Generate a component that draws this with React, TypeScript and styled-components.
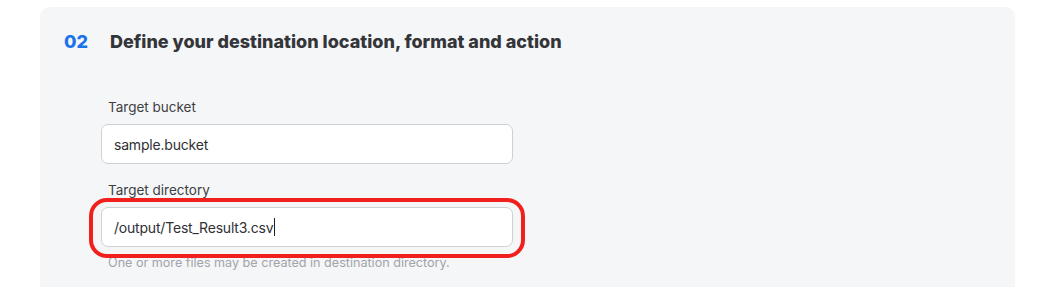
import React from "react";
import styled, { createGlobalStyle } from "styled-components";

const Global = createGlobalStyle`
  html, body { margin: 0; padding: 0; background: #ffffff; }
  body { font-family: Inter, "Noto Sans", sans-serif; -webkit-font-smoothing: antialiased; }
`;

const Page = styled.div`
  padding: 7px 38px 0 40px;
  height: 280px;
  overflow: hidden;
`;

const Panel = styled.section`
  background: #f5f6f8;
  border-radius: 10px 10px 0 0;
  height: 300px;
  padding: 22px 24px 0 24px;
  box-sizing: border-box;
`;

const Header = styled.h2`
  display: flex;
  align-items: baseline;
  gap: 22px;
  margin: 0;
  font-size: 18px;
  font-weight: 800;
  line-height: 26px;
  color: #333538;
`;

const Step = styled.span`
  color: #1a73e8;
`;

const Form = styled.div`
  display: flex;
  flex-direction: column;
  width: 412px;
  margin: 43px 0 0 37px;
`;

const Field = styled.div<{ $gap?: number }>`
  display: flex;
  flex-direction: column;
  margin-top: ${(p) => p.$gap ?? 0}px;
`;

const Label = styled.label`
  font-size: 13.5px;
  line-height: 18px;
  color: #3d3f42;
  padding-left: 7px;
  margin-bottom: 8px;
`;

const Highlight = styled.div`
  position: relative;
  &::after {
    content: "";
    position: absolute;
    left: -12px;
    right: -12px;
    top: -9px;
    bottom: -11px;
    border: 4px solid #f2201c;
    border-radius: 18px;
    pointer-events: none;
  }
`;

const Input = styled.div`
  height: 40px;
  box-sizing: border-box;
  border: 1px solid #cfd1d4;
  border-radius: 7px;
  background: #ffffff;
  display: flex;
  align-items: center;
  padding-left: 12px;
  font-size: 14px;
  letter-spacing: -0.2px;
  color: #2f3134;
`;

const Caret = styled.span`
  display: inline-block;
  width: 1px;
  height: 18px;
  background: #1f1f1f;
  margin-left: 1px;
`;

const Help = styled.p`
  margin: 8px 0 0 7px;
  font-size: 12.6px;
  line-height: 16px;
  color: #a2a4a8;
`;

export default function App() {
  return (
    <>
      <Global />
      <Page>
        <Panel>
          <Header>
            <Step>02</Step>
            <span>Define your destination location, format and action</span>
          </Header>
          <Form>
            <Field>
              <Label>Target bucket</Label>
              <Input>sample.bucket</Input>
            </Field>
            <Field $gap={17}>
              <Label>Target directory</Label>
              <Highlight>
                <Input>
                  /output/Test_Result3.csv
                  <Caret />
                </Input>
              </Highlight>
              <Help>One or more files may be created in destination directory.</Help>
            </Field>
          </Form>
        </Panel>
      </Page>
    </>
  );
}
